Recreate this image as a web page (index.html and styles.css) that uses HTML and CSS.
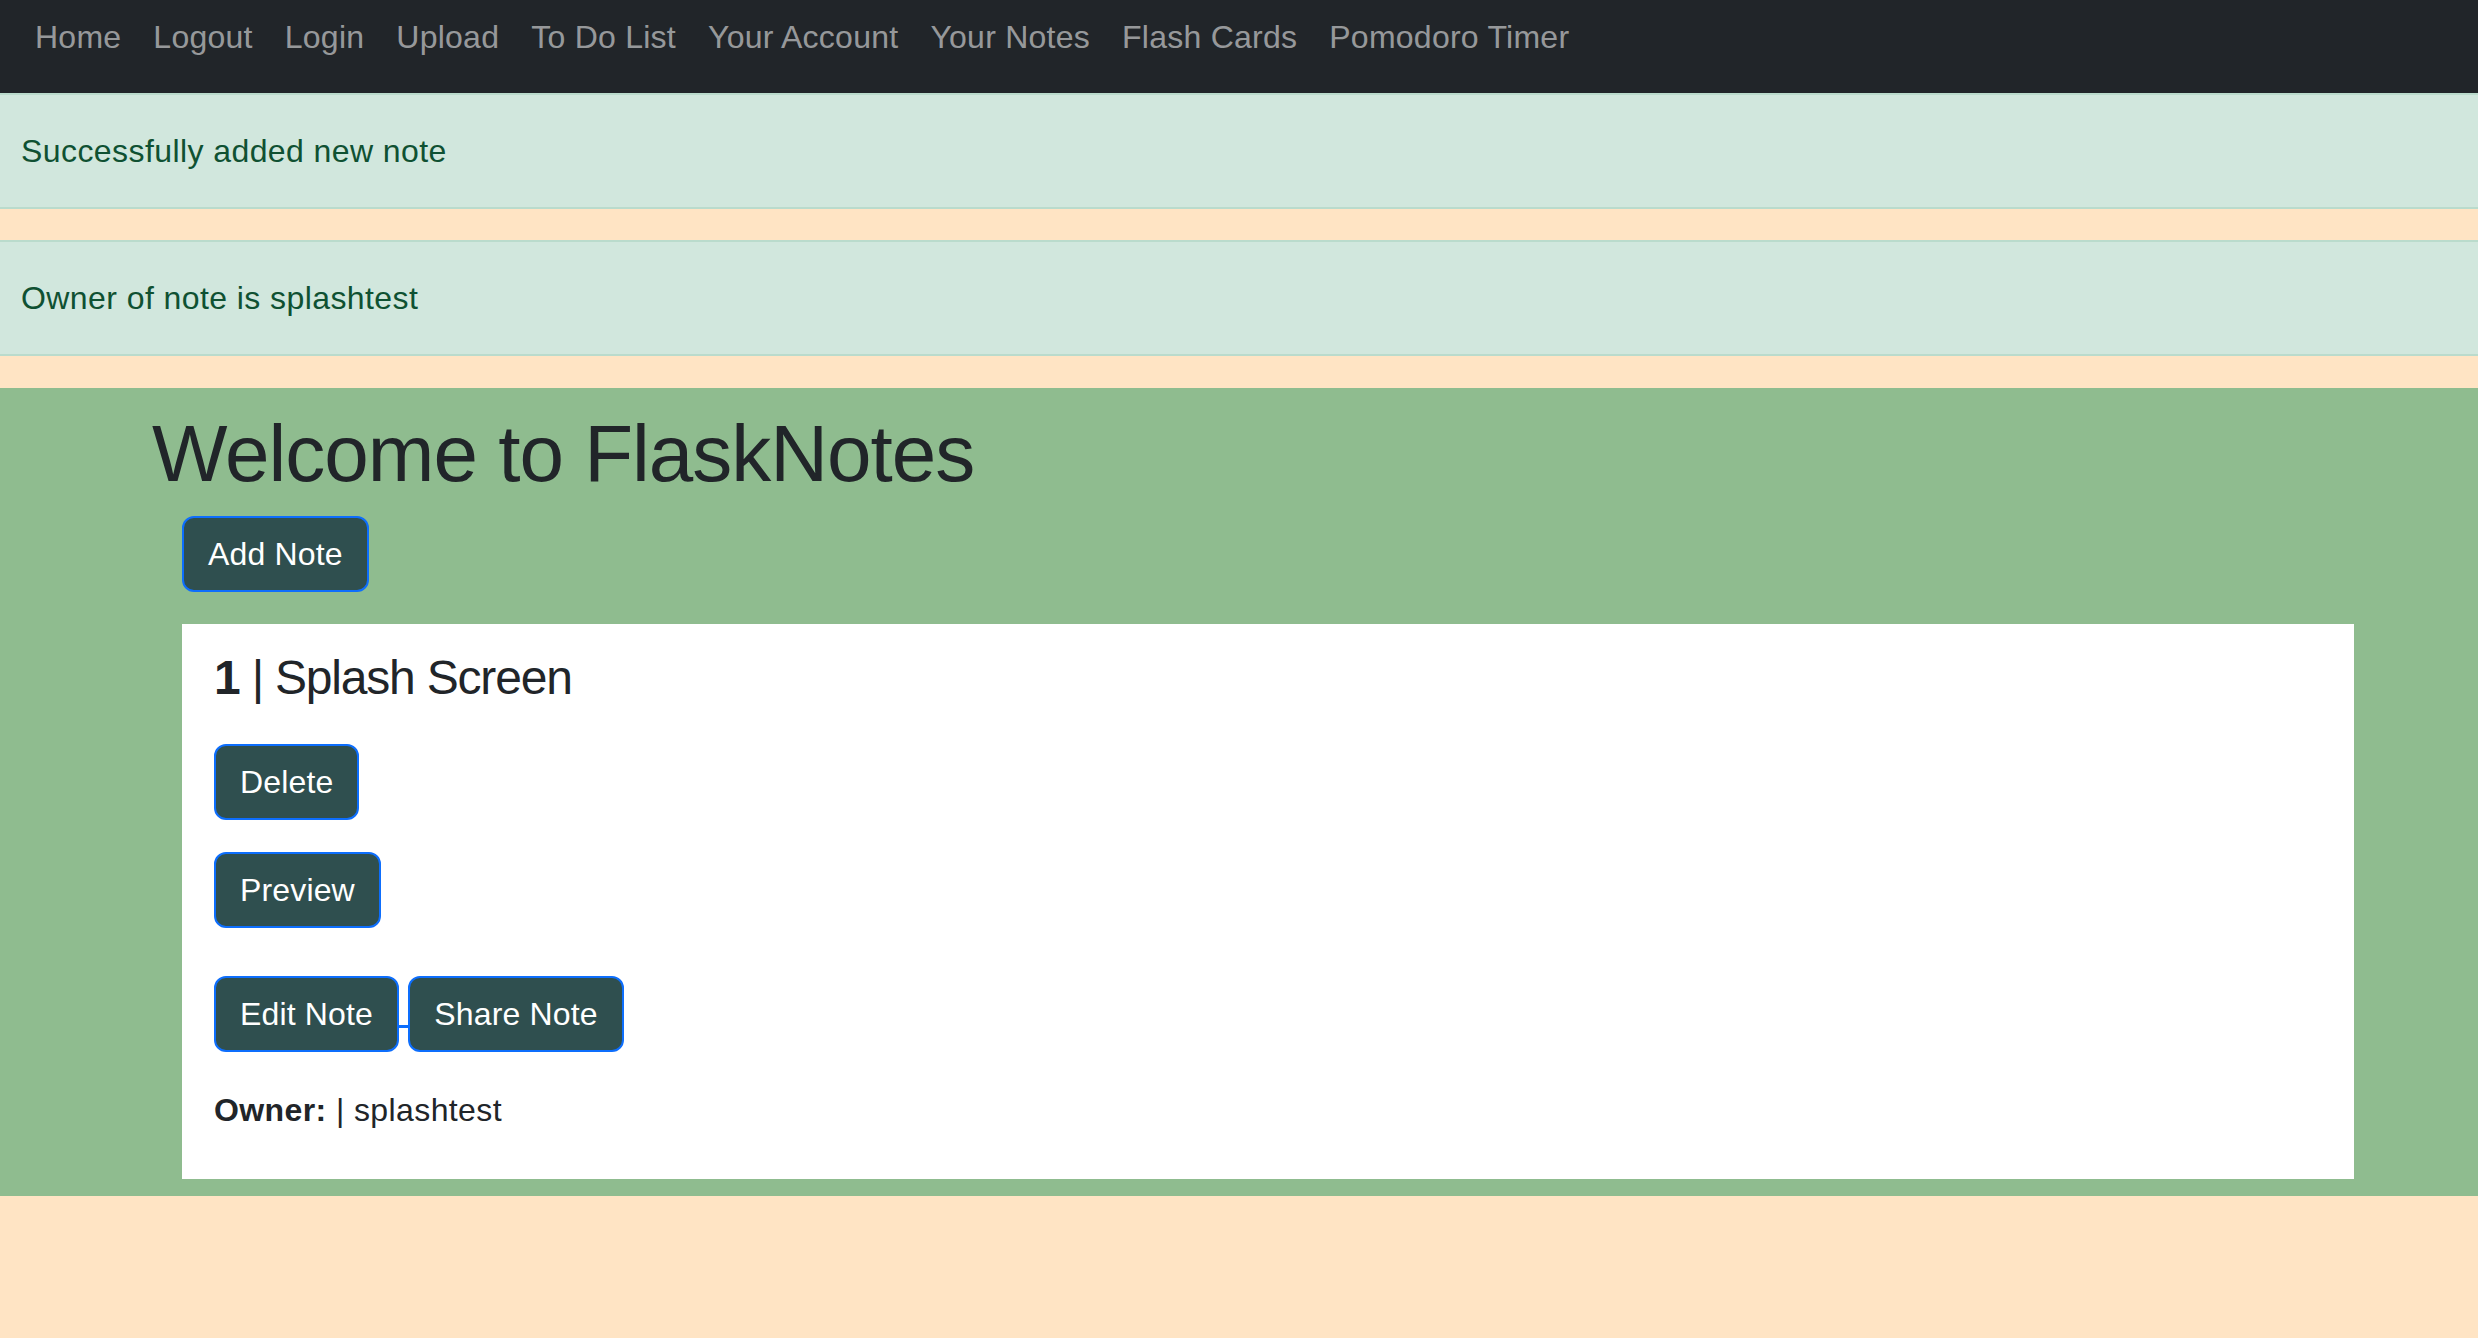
FILE: index.html
```html
<!DOCTYPE html>
<html lang="en">
<head>
<meta charset="utf-8">
<title>FlaskNotes</title>
<link rel="stylesheet" href="styles.css">
</head>
<body>
<nav class="navbar">
  <ul class="nav-list">
    <li><a class="nav-link" href="#">Home</a></li>
    <li><a class="nav-link" href="#">Logout</a></li>
    <li><a class="nav-link" href="#">Login</a></li>
    <li><a class="nav-link" href="#">Upload</a></li>
    <li><a class="nav-link" href="#">To Do List</a></li>
    <li><a class="nav-link" href="#">Your Account</a></li>
    <li><a class="nav-link" href="#">Your Notes</a></li>
    <li><a class="nav-link" href="#">Flash Cards</a></li>
    <li><a class="nav-link" href="#">Pomodoro Timer</a></li>
  </ul>
</nav>
<div class="alert alert-first">Successfully added new note</div>
<div class="alert alert-last">Owner of note is splashtest</div>
<main class="hero">
  <h1 class="title">Welcome to FlaskNotes</h1>
  <div class="content">
    <div class="add-row"><button class="btn" type="button">Add Note</button></div>
    <div class="card">
      <h4 class="note-title"><b>1</b> | Splash Screen</h4>
      <form class="form-row form-delete"><button class="btn" type="button">Delete</button></form>
      <form class="form-row form-preview"><button class="btn" type="button">Preview</button></form>
      <div class="link-row"><a class="btn-link" href="#"><button class="btn" type="button">Edit Note</button> <button class="btn" type="button">Share Note</button></a></div>
      <p class="owner"><b>Owner:</b> | splashtest</p>
    </div>
  </div>
</main>
</body>
</html>
```
FILE: styles.css
```css
html, body {
  margin: 0;
  padding: 0;
}
body {
  background: #ffe4c4;
  font-family: "Liberation Sans", Arial, sans-serif;
  font-size: 32px;
  line-height: 48px;
  letter-spacing: 0.4px;
  color: #212529;
}
.navbar {
  background: #212529;
  height: 93px;
  box-sizing: border-box;
  padding: 13px 0 0 35px;
}
.nav-list {
  list-style: none;
  margin: 0;
  padding: 0;
  display: flex;
  gap: 32px;
}
.nav-link {
  color: rgba(255, 255, 255, 0.55);
  text-decoration: none;
  white-space: nowrap;
  letter-spacing: 0.25px;
}
.alert {
  background: #d1e7dd;
  color: #0f5132;
  border-top: 2px solid #badbcc;
  border-bottom: 2px solid #badbcc;
  padding: 32px 20px 32px 21px;
  letter-spacing: 0.42px;
}
.alert-first {
  margin-bottom: 31px;
}
.alert-last {
  margin-bottom: 32px;
}
.hero {
  background: #8fbc8f;
  padding: 18px 124px 17px 152px;
}
.title {
  margin: 0 0 14px 0;
  font-size: 80px;
  line-height: 96px;
  font-weight: 400;
  letter-spacing: -1px;
  color: #212529;
}
.content {
  padding-left: 30px;
}
.add-row {
  display: flex;
  margin-bottom: 32px;
}
.btn {
  font-family: inherit;
  font-size: 32px;
  line-height: 48px;
  letter-spacing: 0.15px;
  color: #fff;
  background: #2f4f4f;
  border: 2px solid #0d6efd;
  border-radius: 12px;
  padding: 12px 24px;
  margin: 0;
  display: inline-block;
  vertical-align: baseline;
}
.card {
  background: #fff;
  padding: 25px 32px 45px 32px;
}
.note-title {
  margin: 0 0 37px 0;
  font-size: 48px;
  line-height: 58px;
  font-weight: 400;
  letter-spacing: -1.2px;
}
.note-title b {
  font-weight: 700;
}
.form-row {
  display: flex;
  margin: 0;
}
.form-delete {
  margin-bottom: 32px;
}
.form-preview {
  margin-bottom: 48px;
}
.link-row {
  height: 76px;
  margin-bottom: 34px;
}
.btn-link {
  color: #0d6efd;
  text-decoration: underline;
  text-decoration-color: #0d6efd;
  text-underline-offset: 0px;
}
.owner {
  margin: 0;
  letter-spacing: 0.4px;
}
.owner b {
  font-weight: 700;
}
```
